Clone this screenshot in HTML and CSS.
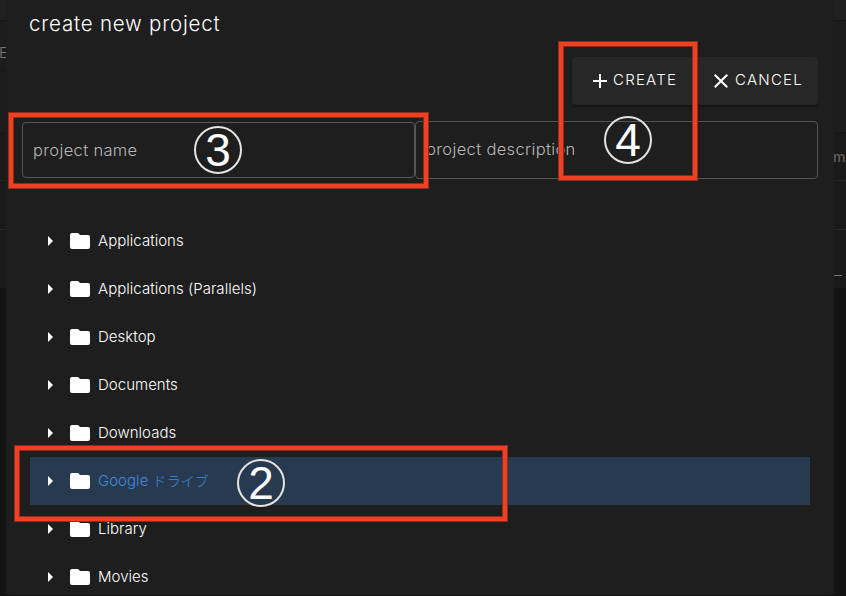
FILE: index.html
```html
<!DOCTYPE html>
<html lang="ja">
<head>
<meta charset="utf-8">
<title>create new project</title>
<link rel="stylesheet" href="styles.css">
</head>
<body>
<svg width="0" height="0" class="defs"><defs>
<symbol id="arrow" viewBox="0 0 24 24"><path d="M10 17l5-5-5-5v10z"/></symbol>
<symbol id="folder" viewBox="0 0 24 24"><path d="M10 4H4c-1.1 0-1.99.9-1.99 2L2 18c0 1.1.9 2 2 2h16c1.1 0 2-.9 2-2V8c0-1.1-.9-2-2-2h-8l-2-2z"/></symbol>
</defs></svg>
<div class="screen">
<aside class="backdrop left"><div class="b1"></div><div class="b2"><span class="letter">E</span></div><div class="b3"></div><div class="b4"></div><div class="b5"></div></aside>
<main class="dialog">
<h1>create new project</h1>
<div class="actions">
<button class="create"><svg viewBox="0 0 24 24"><path d="M19 13h-6v6h-2v-6H5v-2h6V5h2v6h6v2z"/></svg><span>CREATE</span></button>
<button class="cancel"><svg viewBox="0 0 24 24"><path d="M19 6.41L17.59 5 12 10.59 6.41 5 5 6.41 10.59 12 5 17.59 6.41 19 12 13.41 17.59 19 19 17.59 13.41 12z"/></svg><span>CANCEL</span></button>
</div>
<div class="fields"><div class="field name"><span>project name</span></div><div class="field description"><span>project description</span></div></div>
<ul class="tree">
<li><svg><use href="#arrow"/></svg><svg><use href="#folder"/></svg><span>Applications</span></li>
<li><svg><use href="#arrow"/></svg><svg><use href="#folder"/></svg><span>Applications (Parallels)</span></li>
<li><svg><use href="#arrow"/></svg><svg><use href="#folder"/></svg><span>Desktop</span></li>
<li><svg><use href="#arrow"/></svg><svg><use href="#folder"/></svg><span>Documents</span></li>
<li><svg><use href="#arrow"/></svg><svg><use href="#folder"/></svg><span>Downloads</span></li>
<li class="selected"><svg><use href="#arrow"/></svg><svg><use href="#folder"/></svg><span>Google <span class="kana">ドライブ</span></span></li>
<li><svg><use href="#arrow"/></svg><svg><use href="#folder"/></svg><span>Library</span></li>
<li><svg><use href="#arrow"/></svg><svg><use href="#folder"/></svg><span>Movies</span></li>
</ul>
</main>
<aside class="backdrop right"><div class="b1"></div><div class="b2"></div><div class="b3"><span class="letter">m</span></div><div class="b4"></div><div class="b5"></div></aside>
<div class="mark mark3"></div><div class="mark mark4"></div><div class="mark mark2"></div>
<div class="step step3">3</div><div class="step step4">4</div><div class="step step2">2</div>
</div>
</body>
</html>
```
FILE: styles.css
```css
* { box-sizing: border-box; }
body { margin: 0; background: #121212; color: #fff; font-family: Inter, "Noto Sans CJK JP", sans-serif; font-weight: 300; overflow: hidden; }
.defs { position: absolute; }
svg { fill: #fff; }
.screen { position: relative; display: grid; grid-template-columns: 6px 828px 12px; width: 846px; height: 596px; }
.backdrop { overflow: hidden; height: 596px; color: #777; font-size: 16px; background: #131313; }
.b1 { height: 21px; background: #202020; border-bottom: 1px solid #171717; }
.b2 { height: 112px; background: #1d1d1d; border-bottom: 1px solid #161616; padding-top: 22px; }
.left .b2 { height: 50px; border-bottom-color: #171717; }
.left .b3 { height: 62px; background: #1d1d1d; border-bottom-color: #161616; }
.left .b4 { height: 48px; }
.left .b5 { height: 107px; background: linear-gradient(#1a1a1a 48px, #292929 48px, #292929 49px, #1a1a1a 49px); }
.b3 { height: 48px; background: #1a1a1a; border-bottom: 1px solid #292929; }
.b4 { height: 49px; background: #1a1a1a; border-bottom: 1px solid #292929; }
.b5 { height: 58px; background: #1a1a1a; }
.letter { display: block; line-height: 20px; }
.left .letter { margin-left: -1px; font-size: 15px; width: 7px; }
.right .letter { font-size: 14px; font-weight: 500; padding-top: 14px; margin-left: -1px; color: #626262; }
.right .b5 { padding-top: 45px; }
.right .b5::before { content: ""; display: block; width: 8px; height: 1px; background: #777; }
.dialog { height: 595px; background: #1e1e1e; border-radius: 0 0 4px 4px; overflow: hidden; }
h1 { margin: 0; padding: 10px 0 0 23px; height: 57px; font-size: 20.5px; line-height: 27px; font-weight: 300; letter-spacing: .78px; }
.actions { display: flex; justify-content: flex-end; height: 64px; padding-right: 16px; }
button { height: 48px; display: flex; align-items: center; border: 0; border-radius: 4px; background: #272727; color: #fff; font: 300 15px Inter, sans-serif; letter-spacing: 1.25px; box-shadow: 0 2px 2px #0005; padding: 0; }
button svg { width: 24px; height: 24px; }
button span { position: relative; top: -2px; }
.create { width: 124px; padding-left: 16px; }
.create span { margin-left: 1px; }
.cancel { width: 122px; padding-left: 13px; }
.cancel span { margin-left: 2px; }
.fields { display: grid; grid-template-columns: 393px 403px; align-items: center; margin-left: 16px; height: 58px; }
.field { display: flex; align-items: center; border: 1px solid #555; border-radius: 4px; color: #b7b7b7; font-size: 16.5px; letter-spacing: .35px; }
.name { height: 56px; padding-left: 10px; }
.description { height: 58px; padding: 0 0 2px 10px; }
.tree { list-style: none; margin: 38px 24px 0; padding: 0; }
.tree li { display: flex; align-items: center; height: 48px; gap: 6px; padding-left: 8px; font-size: 15px; letter-spacing: .03px; white-space: nowrap; }
.tree li > span { padding-bottom: 2px; }
.tree svg { width: 24px; height: 24px; flex: none; }
.tree .selected { background: #283a50; color: #428bdd; }
.selected .kana { font-size: 14px; line-height: 1; }
.mark { position: absolute; border: 4px solid #ee4023; box-shadow: 0 0 0 1px #8f2d1c, inset 0 0 0 1px #8f2d1c; }
.mark3 { left: 9px; top: 113px; width: 419px; height: 75px; }
.mark4 { left: 559px; top: 42px; width: 138px; height: 138px; }
.mark2 { left: 15px; top: 446px; width: 492px; height: 75px; }
.step { position: absolute; width: 48px; height: 48px; border: 2px solid #e4e4e4; border-radius: 50%; text-align: center; font: 400 46px/44px "Liberation Sans", sans-serif; }
.step3 { left: 194px; top: 126px; }
.step4 { left: 604px; top: 116px; }
.step2 { left: 237px; top: 459px; }
```
